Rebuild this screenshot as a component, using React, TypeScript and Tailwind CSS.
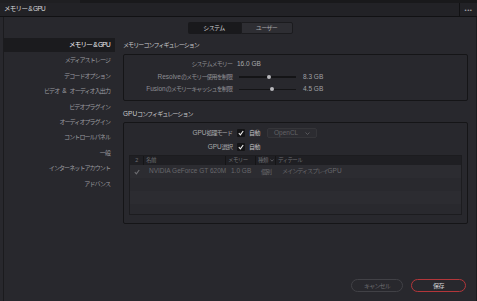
import React from "react";

const F = "font-['Liberation_Sans','Noto_Sans_CJK_JP',sans-serif]";

function L({ children }: { children: React.ReactNode }) {
  return <span className="tracking-[0px] text-[6.5px]">{children}</span>;
}

function Check({ color = "#f0f0f0" }: { color?: string }) {
  return (
    <svg width="6" height="6" viewBox="0 0 6 6">
      <path d="M0.8 3.2 L2.4 4.8 L5.2 1" stroke={color} strokeWidth="1.1" fill="none" />
    </svg>
  );
}

function Slider({ pos }: { pos: number }) {
  return (
    <div className="relative w-[57px] h-[5px] flex items-center">
      <div className="w-full h-[1.5px] bg-[#141416]" />
      <div
        className="absolute top-[0.5px] w-[4px] h-[4px] rounded-full bg-[#b8b8bc]"
        style={{ left: pos }}
      />
    </div>
  );
}

const sideItems: React.ReactNode[] = [
  "メディアストレージ",
  "デコードオプション",
  <>
    <span>ビデオ</span>
    <span className="mx-[3px] tracking-[0px] text-[6.5px]">&amp;</span>
    <span>オーディオ入出力</span>
  </>,
  "ビデオプラグイン",
  "オーディオプラグイン",
  "コントロールパネル",
  "一般",
  "インターネットアカウント",
  "アドバンス",
];

export default function App() {
  return (
    <div className={`w-[477px] h-[301px] bg-[#28282d] flex flex-col overflow-hidden ${F} text-[6px] leading-none`}>
      <div className="h-[3px] bg-[#19191b] flex">
        <div className="w-[80px] bg-[#1f1f22]" />
      </div>
      <div className="h-[14px] bg-[#222226] border-b border-[#111113] flex items-center justify-between">
        <span className="pl-[4px] text-[#d8d8dc] text-[6.5px] tracking-[-0.7px]">メモリー &amp; GPU</span>
        <div className="h-full w-[18px] border-l border-[#111113] flex items-center justify-center text-[#a0a0a4] text-[6px] tracking-[0.5px]">
          •••
        </div>
      </div>
      <div className="flex-1 flex flex-col ml-[3px] border-l border-r border-[#1b1b1e]">
        <div className="h-[21px] flex items-center justify-center pt-[1px]">
          <div className="w-[53px] h-[12px] bg-[#19191c] rounded-l-[2px] flex items-center justify-center text-[#d0d0d4] tracking-[-0.6px]">
            システム
          </div>
          <div className="w-[52px] h-[12px] bg-[#2e2e33] border border-[#1b1b1e] rounded-r-[2px] flex items-center justify-center text-[#a8a8ac] tracking-[-0.6px]">
            ユーザー
          </div>
        </div>
        <div className="flex flex-1">
          <div className="w-[111px] flex flex-col">
            <div className="h-[14px] bg-[#1b1b1e] flex items-center justify-end pr-[5px] text-[#f0f0f2] text-[6.5px] tracking-[-0.7px]">
              メモリー &amp; GPU
            </div>
            {sideItems.map((s, i) => (
              <div
                key={i}
                className="h-[15.4px] flex items-center justify-end pr-[5px] pt-[1.5px] text-[#9c9ca0] tracking-[-0.9px] whitespace-nowrap"
              >
                {s}
              </div>
            ))}
          </div>
          <div className="flex-1 pl-[8px] pr-[8px] flex flex-col">
            <div className="h-[14px] flex items-center text-[#c8c8cc] tracking-[-0.9px]">
              メモリーコンフィギュレーション
            </div>
            <div className="mt-[2px] h-[47px] border border-[#151517] rounded-[2px] pt-[3px] flex flex-col">
              <div className="h-[12.5px] flex items-center">
                <div className="w-[108px] text-right text-[#8e8e93] tracking-[-0.9px]">システムメモリー</div>
                <div className="ml-[5px] text-[#a8a8ac] text-[6.5px]">16.0 GB</div>
              </div>
              <div className="h-[12.5px] flex items-center">
                <div className="w-[108px] text-right text-[#8e8e93] tracking-[-0.9px] whitespace-nowrap"><L>Resolve</L>のメモリー使用を制限</div>
                <div className="ml-[7px]"><Slider pos={28} /></div>
                <div className="ml-[7px] text-[#a0a0a4] text-[6.5px]">8.3 GB</div>
              </div>
              <div className="h-[12.5px] flex items-center">
                <div className="w-[108px] text-right text-[#8e8e93] tracking-[-0.9px] whitespace-nowrap"><L>Fusion</L>のメモリーキャッシュを制限</div>
                <div className="ml-[7px]"><Slider pos={31} /></div>
                <div className="ml-[7px] text-[#a0a0a4] text-[6.5px]">4.5 GB</div>
              </div>
            </div>
            <div className="mt-[6px] h-[14px] flex items-center text-[#c8c8cc] tracking-[-0.9px]">
              <L>GPU</L>コンフィギュレーション
            </div>
            <div className="mt-[1px] h-[102px] border border-[#151517] rounded-[2px] pt-[3px] flex flex-col">
              <div className="h-[14px] flex items-center">
                <div className="w-[108px] text-right text-[#a8a8ac] tracking-[-0.9px]"><L>GPU</L>処理モード</div>
                <div className="ml-[5px] w-[8px] h-[8px] bg-[#141416] rounded-[1px] flex items-center justify-center"><Check /></div>
                <div className="ml-[4px] text-[#c0c0c4] tracking-[-0.5px]">自動</div>
                <div className="ml-[7px] w-[50px] h-[10px] bg-[#2c2c31] border border-[#353539] rounded-[2px] flex items-center justify-between px-[6px] text-[#626266] text-[6.5px]">
                  <span>OpenCL</span>
                  <svg width="5" height="3" viewBox="0 0 5 3"><path d="M0.5 0.5 L2.5 2.5 L4.5 0.5" stroke="#626266" strokeWidth="0.8" fill="none" /></svg>
                </div>
              </div>
              <div className="h-[14px] flex items-center">
                <div className="w-[108px] text-right text-[#a8a8ac] tracking-[-0.9px]"><L>GPU</L>選択</div>
                <div className="ml-[5px] w-[8px] h-[8px] bg-[#141416] rounded-[1px] flex items-center justify-center"><Check /></div>
                <div className="ml-[4px] text-[#c0c0c4] tracking-[-0.5px]">自動</div>
              </div>
              <div className="mt-[1px] mx-[5px] h-[60px] border border-[#1c1c1f] flex flex-col">
                <div className="h-[9px] bg-[#1f1f23] flex items-center text-[#6e6e72] text-[5.5px] tracking-[-0.6px]">
                  <div className="w-[14px] h-full border-r border-[#151517] flex items-center justify-center">2</div>
                  <div className="w-[82px] h-full border-r border-[#151517] flex items-center pl-[2px]">名前</div>
                  <div className="w-[30px] h-full border-r border-[#151517] flex items-center pl-[2px]">メモリー</div>
                  <div className="w-[20px] h-full border-r border-[#151517] flex items-center pl-[2px] gap-[2px]">
                    種類
                    <svg width="4" height="3" viewBox="0 0 4 3"><path d="M0.5 0.5 L2 2.2 L3.5 0.5" stroke="#6e6e72" strokeWidth="0.7" fill="none" /></svg>
                  </div>
                  <div className="flex-1 h-full flex items-center pl-[2px]">ディテール</div>
                </div>
                <div className="h-[13px] bg-[#2c2c31] flex items-center text-[#68686c] text-[6.5px]">
                  <div className="w-[14px] flex items-center justify-center"><Check color="#6e6e72" /></div>
                  <div className="w-[82px] pl-[5px] whitespace-nowrap">NVIDIA GeForce GT 620M</div>
                  <div className="w-[30px] pl-[5px]">1.0 GB</div>
                  <div className="w-[20px] pl-[5px] tracking-[-0.9px] text-[6px]">個別</div>
                  <div className="flex-1 pl-[6px] tracking-[-0.9px] text-[6px] whitespace-nowrap">メインディスプレイ<L>GPU</L></div>
                </div>
                <div className="h-[13px] bg-[#29292e]" />
                <div className="h-[13px] bg-[#2c2c31]" />
                <div className="flex-1 bg-[#29292e]" />
              </div>
            </div>
          </div>
        </div>
        <div className="h-[22px] flex items-start justify-end pr-[10px] gap-[8px]">
          <div className="w-[52px] h-[13px] rounded-full border border-[#414146] flex items-center justify-center text-[#6c6c70] tracking-[-0.8px]">
            キャンセル
          </div>
          <div className="w-[55px] h-[13px] rounded-full border border-[#b3363a] flex items-center justify-center text-[#d0d0d4] tracking-[-0.5px]">
            保存
          </div>
        </div>
      </div>
    </div>
  );
}
